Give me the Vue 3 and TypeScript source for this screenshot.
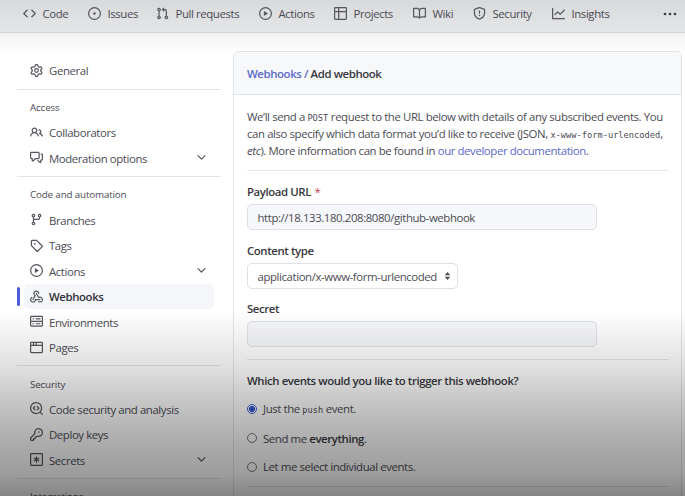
<script setup lang="ts">
interface NavItem { label: string; icon: string }
interface MenuRow { label: string; icon: string; expandable?: boolean; active?: boolean }
interface MenuGroup { title: string; rows: MenuRow[] }

const play = 'M8 0a8 8 0 1 1 0 16A8 8 0 0 1 8 0ZM1.5 8a6.5 6.5 0 1 0 13 0 6.5 6.5 0 0 0-13 0Zm4.879-2.773 4.264 2.559a.25.25 0 0 1 0 .428l-4.264 2.559A.25.25 0 0 1 6 10.559V5.442a.25.25 0 0 1 .379-.215Z'

const icons: Record<string, string> = {
  code: 'm11.28 3.22 4.25 4.25a.75.75 0 0 1 0 1.06l-4.25 4.25a.749.749 0 0 1-1.275-.326.749.749 0 0 1 .215-.734L13.94 8l-3.72-3.72a.749.749 0 0 1 .326-1.275.749.749 0 0 1 .734.215Zm-6.56 0a.751.751 0 0 1 1.042.018.751.751 0 0 1 .018 1.042L2.06 8l3.72 3.72a.749.749 0 0 1-.326 1.275.749.749 0 0 1-.734-.215L.47 8.53a.75.75 0 0 1 0-1.06Z',
  issue: 'M8 9.5a1.5 1.5 0 1 0 0-3 1.5 1.5 0 0 0 0 3ZM8 0a8 8 0 1 1 0 16A8 8 0 0 1 8 0ZM1.5 8a6.5 6.5 0 1 0 13 0 6.5 6.5 0 0 0-13 0Z',
  pull: 'M1.5 3.25a2.25 2.25 0 1 1 3 2.122v5.256a2.251 2.251 0 1 1-1.5 0V5.372A2.25 2.25 0 0 1 1.5 3.25Zm5.677-.177L9.573.677A.25.25 0 0 1 10 .854V2.5h1A2.5 2.5 0 0 1 13.5 5v5.628a2.251 2.251 0 1 1-1.5 0V5a1 1 0 0 0-1-1h-1v1.646a.25.25 0 0 1-.427.177L7.177 3.427a.25.25 0 0 1 0-.354ZM3.75 2.5a.75.75 0 1 0 0 1.5.75.75 0 0 0 0-1.5Zm0 9.5a.75.75 0 1 0 0 1.5.75.75 0 0 0 0-1.5Zm8.25.75a.75.75 0 1 0 1.5 0 .75.75 0 0 0-1.5 0Z',
  play,
  table: 'M0 1.75C0 .784.784 0 1.75 0h12.5C15.216 0 16 .784 16 1.75v12.5A1.75 1.75 0 0 1 14.25 16H1.75A1.75 1.75 0 0 1 0 14.25ZM6.5 6.5v8h7.75a.25.25 0 0 0 .25-.25V6.5Zm8-1.5V1.75a.25.25 0 0 0-.25-.25H6.5V5Zm-13 1.5v7.75c0 .138.112.25.25.25H5v-8ZM5 5V1.5H1.75a.25.25 0 0 0-.25.25V5Z',
  book: 'M0 1.75A.75.75 0 0 1 .75 1h4.253c1.227 0 2.317.59 3 1.501A3.743 3.743 0 0 1 11.006 1h4.245a.75.75 0 0 1 .75.75v10.5a.75.75 0 0 1-.75.75h-4.507a2.25 2.25 0 0 0-1.591.659l-.622.621a.75.75 0 0 1-1.06 0l-.622-.621A2.25 2.25 0 0 0 5.258 13H.75a.75.75 0 0 1-.75-.75Zm7.251 10.324.004-5.073-.002-2.253A2.25 2.25 0 0 0 5.003 2.5H1.5v9h3.757a3.75 3.75 0 0 1 1.994.574ZM8.755 4.75l-.004 7.322a3.752 3.752 0 0 1 1.992-.572H14.5v-9h-3.495a2.25 2.25 0 0 0-2.25 2.25Z',
  shield: 'M7.467.133a1.748 1.748 0 0 1 1.066 0l5.25 1.68A1.75 1.75 0 0 1 15 3.48V7c0 1.566-.32 3.182-1.303 4.682-.983 1.498-2.585 2.813-5.032 3.855a1.697 1.697 0 0 1-1.33 0c-2.447-1.042-4.049-2.357-5.032-3.855C1.32 10.182 1 8.566 1 7V3.48a1.75 1.75 0 0 1 1.217-1.667Zm.61 1.429a.25.25 0 0 0-.153 0l-5.25 1.68a.25.25 0 0 0-.174.238V7c0 1.358.275 2.666 1.057 3.86.784 1.194 2.121 2.34 4.366 3.297a.196.196 0 0 0 .154 0c2.245-.956 3.582-2.104 4.366-3.298C13.225 9.666 13.5 8.36 13.5 7V3.48a.251.251 0 0 0-.174-.237l-5.25-1.68ZM8.75 4.75v3a.75.75 0 0 1-1.5 0v-3a.75.75 0 0 1 1.5 0ZM9 10.5a1 1 0 1 1-2 0 1 1 0 0 1 2 0Z',
  graph: 'M1.5 1.75V13.5h13.75a.75.75 0 0 1 0 1.5H.75a.75.75 0 0 1-.75-.75V1.75a.75.75 0 0 1 1.5 0Zm14.28 2.53-5.25 5.25a.75.75 0 0 1-1.06 0L7 7.06 4.28 9.78a.751.751 0 0 1-1.042-.018.751.751 0 0 1-.018-1.042l3.25-3.25a.75.75 0 0 1 1.06 0L10 7.94l4.72-4.72a.751.751 0 0 1 1.042.018.751.751 0 0 1 .018 1.042Z',
  gear: 'M8 0a8.2 8.2 0 0 1 .701.031C9.444.095 9.99.645 10.16 1.29l.288 1.107c.018.066.079.158.212.224.231.114.454.243.668.386.123.082.233.09.299.071l1.103-.303c.644-.176 1.392.021 1.82.63.27.385.506.792.704 1.218.315.675.111 1.422-.364 1.891l-.814.806c-.049.048-.098.147-.088.294.016.257.016.515 0 .772-.01.147.038.246.088.294l.814.806c.475.469.679 1.216.364 1.891a7.977 7.977 0 0 1-.704 1.217c-.428.61-1.176.807-1.82.63l-1.102-.302c-.067-.019-.177-.011-.3.071a5.909 5.909 0 0 1-.668.386c-.133.066-.194.158-.211.224l-.29 1.106c-.168.646-.715 1.196-1.458 1.26a8.006 8.006 0 0 1-1.402 0c-.743-.064-1.289-.614-1.458-1.26l-.289-1.106c-.018-.066-.079-.158-.212-.224a5.738 5.738 0 0 1-.668-.386c-.123-.082-.233-.09-.299-.071l-1.103.303c-.644.176-1.392-.021-1.82-.63a8.12 8.12 0 0 1-.704-1.218c-.315-.675-.111-1.422.363-1.891l.815-.806c.05-.048.098-.147.088-.294a6.214 6.214 0 0 1 0-.772c.01-.147-.038-.246-.088-.294l-.815-.806C.635 6.045.431 5.298.746 4.623a7.92 7.92 0 0 1 .704-1.217c.428-.61 1.176-.807 1.82-.63l1.102.302c.067.019.177.011.3-.071.214-.143.437-.272.668-.386.133-.066.194-.158.211-.224l.29-1.106C6.009.645 6.556.095 7.299.03 7.53.01 7.764 0 8 0Zm-.571 1.525c-.036.003-.108.036-.137.146l-.289 1.105c-.147.561-.549.967-.998 1.189-.173.086-.34.183-.5.29-.417.278-.97.423-1.529.27l-1.103-.303c-.109-.03-.175.016-.195.045-.22.312-.412.644-.573.99-.014.031-.021.11.059.19l.815.806c.411.406.562.957.53 1.456a4.709 4.709 0 0 0 0 .582c.032.499-.119 1.05-.53 1.456l-.815.806c-.081.08-.073.159-.059.19.162.346.353.677.573.989.02.03.085.076.195.046l1.102-.303c.56-.153 1.113-.008 1.53.27.161.107.328.204.501.29.447.222.85.629.997 1.189l.289 1.105c.029.109.101.143.137.146a6.6 6.6 0 0 0 1.142 0c.036-.003.108-.036.137-.146l.289-1.105c.147-.561.549-.967.998-1.189.173-.086.34-.183.5-.29.417-.278.97-.423 1.529-.27l1.103.303c.109.029.175-.016.195-.045.22-.313.411-.644.573-.99.014-.031.021-.11-.059-.19l-.815-.806c-.411-.406-.562-.957-.53-1.456a4.709 4.709 0 0 0 0-.582c-.032-.499.119-1.05.53-1.456l.815-.806c.081-.08.073-.159.059-.19a6.464 6.464 0 0 0-.573-.989c-.02-.03-.085-.076-.195-.046l-1.102.303c-.56.153-1.113.008-1.53-.27a4.44 4.44 0 0 0-.501-.29c-.447-.222-.85-.629-.997-1.189l-.289-1.105c-.029-.11-.101-.143-.137-.146a6.6 6.6 0 0 0-1.142 0ZM11 8a3 3 0 1 1-6 0 3 3 0 0 1 6 0ZM9.5 8a1.5 1.5 0 1 0-3.001.001A1.5 1.5 0 0 0 9.5 8Z',
  people: 'M2 5.5a3.5 3.5 0 1 1 5.898 2.549 5.508 5.508 0 0 1 3.034 4.084.75.75 0 1 1-1.482.235 4 4 0 0 0-7.9 0 .75.75 0 0 1-1.482-.236A5.507 5.507 0 0 1 3.102 8.05 3.493 3.493 0 0 1 2 5.5ZM11 4a3.001 3.001 0 0 1 2.22 5.018 5.01 5.01 0 0 1 2.56 3.012.749.749 0 0 1-.885.954.752.752 0 0 1-.549-.514 3.507 3.507 0 0 0-2.522-2.372.75.75 0 0 1-.574-.73v-.352a.75.75 0 0 1 .416-.672A1.5 1.5 0 0 0 11 5.5.75.75 0 0 1 11 4Zm-5.5-.5a2 2 0 1 0-.001 3.999A2 2 0 0 0 5.5 3.5Z',
  discussion: 'M1.75 1h8.5c.966 0 1.75.784 1.75 1.75v5.5A1.75 1.75 0 0 1 10.25 10H7.061l-2.574 2.573A1.458 1.458 0 0 1 2 11.543V10h-.25A1.75 1.75 0 0 1 0 8.25v-5.5C0 1.784.784 1 1.75 1ZM1.5 2.75v5.5c0 .138.112.25.25.25h1a.75.75 0 0 1 .75.75v2.19l2.72-2.72a.749.749 0 0 1 .53-.22h3.5a.25.25 0 0 0 .25-.25v-5.5a.25.25 0 0 0-.25-.25h-8.5a.25.25 0 0 0-.25.25Zm13 2a.25.25 0 0 0-.25-.25h-.5a.75.75 0 0 1 0-1.5h.5c.966 0 1.75.784 1.75 1.75v5.5A1.75 1.75 0 0 1 14.25 12H14v1.543a1.458 1.458 0 0 1-2.487 1.03L9.22 12.28a.749.749 0 0 1 .326-1.275.749.749 0 0 1 .734.215l2.22 2.22v-2.19a.75.75 0 0 1 .75-.75h1a.25.25 0 0 0 .25-.25Z',
  branch: 'M9.5 3.25a2.25 2.25 0 1 1 3 2.122V6A2.5 2.5 0 0 1 10 8.5H6a1 1 0 0 0-1 1v1.128a2.251 2.251 0 1 1-1.5 0V5.372a2.25 2.25 0 1 1 1.5 0v1.836A2.493 2.493 0 0 1 6 7h4a1 1 0 0 0 1-1v-.628A2.25 2.25 0 0 1 9.5 3.25Zm-6 0a.75.75 0 1 0 1.5 0 .75.75 0 0 0-1.5 0Zm8.25-.75a.75.75 0 1 0 0 1.5.75.75 0 0 0 0-1.5ZM4.25 12a.75.75 0 1 0 0 1.5.75.75 0 0 0 0-1.5Z',
  tag: 'M1 7.775V2.75C1 1.784 1.784 1 2.75 1h5.025c.464 0 .91.184 1.238.513l6.25 6.25a1.75 1.75 0 0 1 0 2.474l-5.026 5.026a1.75 1.75 0 0 1-2.474 0l-6.25-6.25A1.752 1.752 0 0 1 1 7.775Zm1.5 0c0 .066.026.13.073.177l6.25 6.25a.25.25 0 0 0 .354 0l5.025-5.025a.25.25 0 0 0 0-.354l-6.25-6.25a.25.25 0 0 0-.177-.073H2.75a.25.25 0 0 0-.25.25ZM6 5a1 1 0 1 1 0 2 1 1 0 0 1 0-2Z',
  webhook: 'M5.5 4.25a2.25 2.25 0 0 1 4.5 0 .75.75 0 0 0 1.5 0 3.75 3.75 0 1 0-6.14 2.889l-2.272 4.258a.75.75 0 0 0 1.324.706L7 7.25a.75.75 0 0 0-.309-1.015A2.25 2.25 0 0 1 5.5 4.25ZM7.364 3.607a.75.75 0 0 1 1.03.257l2.608 4.349a3.75 3.75 0 1 1-.628 6.785.75.75 0 0 1 .752-1.299 2.25 2.25 0 1 0-.033-3.88.75.75 0 0 1-1.03-.256L7.107 4.636a.75.75 0 0 1 .257-1.03ZM2.9 8.776A.75.75 0 0 1 2.625 9.8 2.25 2.25 0 1 0 6 11.75a.75.75 0 0 1 .75-.751h5.5a.75.75 0 0 1 0 1.5H7.425a3.751 3.751 0 1 1-5.55-3.998.75.75 0 0 1 1.024.274Z',
  server: 'M1.75 1h12.5c.966 0 1.75.784 1.75 1.75v4c0 .372-.116.717-.314 1 .198.283.314.628.314 1v4a1.75 1.75 0 0 1-1.75 1.75H1.75A1.75 1.75 0 0 1 0 12.75v-4c0-.358.109-.707.314-1a1.739 1.739 0 0 1-.314-1v-4C0 1.784.784 1 1.75 1ZM1.5 2.75v4c0 .138.112.25.25.25h12.5a.25.25 0 0 0 .25-.25v-4a.25.25 0 0 0-.25-.25H1.75a.25.25 0 0 0-.25.25Zm.25 5.75a.25.25 0 0 0-.25.25v4c0 .138.112.25.25.25h12.5a.25.25 0 0 0 .25-.25v-4a.25.25 0 0 0-.25-.25ZM7 4.75A.75.75 0 0 1 7.75 4h4.5a.75.75 0 0 1 0 1.5h-4.5A.75.75 0 0 1 7 4.75ZM7.75 10h4.5a.75.75 0 0 1 0 1.5h-4.5a.75.75 0 0 1 0-1.5ZM3 4.75A.75.75 0 0 1 3.75 4h.5a.75.75 0 0 1 0 1.5h-.5A.75.75 0 0 1 3 4.75ZM3.75 10h.5a.75.75 0 0 1 0 1.5h-.5a.75.75 0 0 1 0-1.5Z',
  browser: 'M0 2.75C0 1.784.784 1 1.75 1h12.5c.966 0 1.75.784 1.75 1.75v10.5A1.75 1.75 0 0 1 14.25 15H1.75A1.75 1.75 0 0 1 0 13.25ZM14.5 6h-13v7.25c0 .138.112.25.25.25h12.5a.25.25 0 0 0 .25-.25Zm-6-3.5v2h6V2.75a.25.25 0 0 0-.25-.25ZM5 2.5v2h2v-2Zm-3.25 0a.25.25 0 0 0-.25.25V4.5h2v-2Z',
  codescan: 'M8.47 4.97a.75.75 0 0 0 0 1.06L9.94 7.5 8.47 8.97a.75.75 0 1 0 1.06 1.06l2-2a.75.75 0 0 0 0-1.06l-2-2a.75.75 0 0 0-1.06 0ZM6.53 6.03a.75.75 0 0 0-1.06-1.06l-2 2a.75.75 0 0 0 0 1.06l2 2a.75.75 0 1 0 1.06-1.06L5.06 7.5l1.47-1.47ZM12.246 13.307a7.501 7.501 0 1 1 1.06-1.06l2.474 2.473a.749.749 0 0 1-.326 1.275.749.749 0 0 1-.734-.215ZM1.5 7.5a6.002 6.002 0 0 0 3.608 5.504 6.002 6.002 0 0 0 6.486-1.117.748.748 0 0 1 .292-.293A6 6 0 1 0 1.5 7.5Z',
  key: 'M10.5 0a5.499 5.499 0 1 1-1.288 10.848l-.932.932a.749.749 0 0 1-.53.22H7v.75a.749.749 0 0 1-.22.53l-.5.5a.749.749 0 0 1-.53.22H5v.75a.749.749 0 0 1-.22.53l-.5.5a.749.749 0 0 1-.53.22h-2A1.75 1.75 0 0 1 0 14.25v-2c0-.199.079-.389.22-.53l4.932-4.932A5.5 5.5 0 0 1 10.5 0Zm-4 5.5c-.001.431.069.86.205 1.269a.75.75 0 0 1-.181.768L1.5 12.56v1.69c0 .138.112.25.25.25h1.69l.06-.06v-1.19a.75.75 0 0 1 .75-.75h1.19l.06-.06v-1.19a.75.75 0 0 1 .75-.75h1.19l1.023-1.025a.75.75 0 0 1 .768-.18A4 4 0 1 0 6.5 5.5ZM11 6a1 1 0 1 1 0-2 1 1 0 0 1 0 2Z',
  asterisk: 'M1.75 0h12.5C15.216 0 16 .784 16 1.75v12.5A1.75 1.75 0 0 1 14.25 16H1.75A1.75 1.75 0 0 1 0 14.25V1.75C0 .784.784 0 1.75 0ZM1.5 1.75v12.5c0 .138.112.25.25.25h12.5a.25.25 0 0 0 .25-.25V1.75a.25.25 0 0 0-.25-.25H1.75a.25.25 0 0 0-.25.25ZM8 4a.75.75 0 0 1 .75.75V6.7l1.69-.975a.75.75 0 0 1 .75 1.3L9.5 8l1.69.976a.75.75 0 0 1-.75 1.298L8.75 9.3v1.951a.75.75 0 0 1-1.5 0V9.299l-1.69.976a.75.75 0 0 1-.75-1.3L6.5 8l-1.69-.975a.75.75 0 0 1 .75-1.3l1.69.976V4.75A.75.75 0 0 1 8 4Z',
  chevron: 'M12.78 5.22a.749.749 0 0 1 0 1.06l-4.25 4.25a.749.749 0 0 1-1.06 0L3.22 6.28a.749.749 0 1 1 1.06-1.06L8 8.939l3.72-3.719a.749.749 0 0 1 1.06 0Z',
}

const nav: NavItem[] = [
  { label: 'Code', icon: 'code' },
  { label: 'Issues', icon: 'issue' },
  { label: 'Pull requests', icon: 'pull' },
  { label: 'Actions', icon: 'play' },
  { label: 'Projects', icon: 'table' },
  { label: 'Wiki', icon: 'book' },
  { label: 'Security', icon: 'shield' },
  { label: 'Insights', icon: 'graph' },
]

const groups: MenuGroup[] = [
  {
    title: 'Access',
    rows: [
      { label: 'Collaborators', icon: 'people' },
      { label: 'Moderation options', icon: 'discussion', expandable: true },
    ],
  },
  {
    title: 'Code and automation',
    rows: [
      { label: 'Branches', icon: 'branch' },
      { label: 'Tags', icon: 'tag' },
      { label: 'Actions', icon: 'play', expandable: true },
      { label: 'Webhooks', icon: 'webhook', active: true },
      { label: 'Environments', icon: 'server' },
      { label: 'Pages', icon: 'browser' },
    ],
  },
  {
    title: 'Security',
    rows: [
      { label: 'Code security and analysis', icon: 'codescan' },
      { label: 'Deploy keys', icon: 'key' },
      { label: 'Secrets', icon: 'asterisk', expandable: true },
    ],
  },
  { title: 'Integrations', rows: [] },
]
</script>

<template>
  <div class="page">
    <nav class="topbar">
      <a v-for="item in nav" :key="item.label" class="tab">
        <svg class="icon" viewBox="0 0 16 16"><path :d="icons[item.icon]" /></svg>
        <span>{{ item.label }}</span>
      </a>
      <svg class="more" viewBox="0 0 14 4"><circle cx="2" cy="2" r="1.35" /><circle cx="7" cy="2" r="1.35" /><circle cx="12" cy="2" r="1.35" /></svg>
    </nav>

    <div class="content">
      <aside class="sidebar">
        <a class="row general">
          <svg class="icon" viewBox="0 0 16 16"><path :d="icons.gear" /></svg>
          <span>General</span>
        </a>
        <section v-for="group in groups" :key="group.title" class="group">
          <h3>{{ group.title }}</h3>
          <a v-for="row in group.rows" :key="row.label" class="row" :class="{ active: row.active }">
            <svg class="icon" viewBox="0 0 16 16"><path :d="icons[row.icon]" /></svg>
            <span>{{ row.label }}</span>
            <svg v-if="row.expandable" class="icon chevron" viewBox="0 0 16 16"><path :d="icons.chevron" /></svg>
          </a>
        </section>
      </aside>

      <main class="card">
        <header><a>Webhooks /</a> Add webhook</header>
        <div class="body">
          <div class="intro">
            <div class="line">We’ll send a <code>POST</code> request to the URL below with details of any subscribed events. You</div>
            <div class="line">can also specify which data format you’d like to receive (JSON, <code>x-www-form-urlencoded</code>,</div>
            <div class="line"><em>etc</em>). More information can be found in <a>our developer documentation</a>.</div>
          </div>
          <div class="fields">
            <label>Payload URL <i>*</i></label>
            <div class="input">http://18.133.180.208:8080/github-webhook</div>
            <label>Content type</label>
            <div class="select">
              <span>application/x-www-form-urlencoded</span>
              <svg viewBox="0 0 8 10"><path d="M4 0 7.4 4H.6ZM4 10 .6 6h6.8Z" /></svg>
            </div>
            <label>Secret</label>
            <div class="input"></div>
          </div>
          <div class="events">
            <h4>Which events would you like to trigger this webhook?</h4>
            <div class="option"><span class="radio on"></span><p>Just the <code>push</code> event.</p></div>
            <div class="option"><span class="radio"></span><p>Send me <b>everything</b>.</p></div>
            <div class="option"><span class="radio"></span><p>Let me select individual events.</p></div>
          </div>
        </div>
      </main>
    </div>
    <div class="shade"></div>
  </div>
</template>

<style>
body { margin: 0; overflow: hidden; }
</style>

<style scoped>
* { box-sizing: border-box; }
.page {
  position: relative;
  width: 685px;
  height: 496px;
  overflow: hidden;
  background: #fff;
  color: #4b4b53;
  font-family: "Open Sans", "Noto Sans", sans-serif;
  font-size: 11.4px;
  letter-spacing: -0.4px;
  line-height: 17px;
  white-space: nowrap;
}
.icon { width: 13px; height: 13px; flex: none; fill: #55565e; }
.topbar {
  display: grid;
  grid-template-columns: 65px 68px 103px 75px 79px 60px 79px 111px 14px;
  align-items: center;
  height: 33px;
  padding: 0 0 5px 23px;
  background: linear-gradient(#d8d9db, #e5e6e8);
  border-bottom: 1px solid #cfd1d3;
}
.tab { display: flex; align-items: center; gap: 6.5px; }
.more { width: 14px; height: 4px; fill: #3f4046; }
.content {
  display: flex;
  height: 463px;
  background: linear-gradient(#f0f1f1, #fff 20px);
}
.sidebar { width: 233px; padding: 25px 12px 0 17px; }
.row {
  position: relative;
  display: flex;
  align-items: center;
  gap: 6px;
  height: 25.5px;
  margin: 0 7px 0 7px;
  padding: 0 6px;
  border-radius: 5px;
}
.row .icon { margin-top: -1px; }
.row .chevron { margin-left: auto; }
.row.active { background: #f5f6f9; color: #303039; font-weight: 600; }
.row.active::before {
  content: "";
  position: absolute;
  left: -7px;
  top: 3px;
  width: 3px;
  height: 19px;
  border-radius: 3px;
  background: #4860d8;
}
.general { margin-bottom: 5px; }
.group { padding-bottom: 4.7px; border-top: 1px solid #e2e6e9; }
h3 {
  height: 30.6px;
  margin: 0;
  padding: 9.5px 13px 0;
  font-size: 9.8px;
  font-weight: 500;
  letter-spacing: -0.15px;
  line-height: 17px;
}
.card {
  width: 449px;
  height: 470px;
  margin-top: 18px;
  border: 1px solid #e1e5e8;
  border-radius: 5px;
  background: #fff;
}
.card header {
  height: 43px;
  padding: 13px 13px 0;
  border-bottom: 1px solid #dee4e9;
  border-radius: 4px 4px 0 0;
  background: #f6f8fa;
  color: #36363e;
  font-weight: 600;
}
a { color: inherit; }
header a, .intro a { color: #5b69c8; }
.body { padding: 13px 12px 0 13px; }
.intro { height: 63px; border-bottom: 1px solid #e7e8ea; }
.line { height: 17px; }
code { font-family: "DejaVu Sans Mono", "Liberation Mono", monospace; font-size: 8.7px; letter-spacing: 0; }
.fields { height: 189px; padding-top: 12px; border-bottom: 1px solid #e4e5e7; }
label, h4 { display: block; height: 17px; margin: 0; font-size: 11.4px; font-weight: 600; color: #383840; }
label i { color: #c33d4e; font-style: normal; font-weight: 400; margin-left: 1px; }
.input, .select {
  height: 26px;
  border: 1px solid #dde1e6;
  border-radius: 5px;
  padding: 4px 9.5px;
}
.input { width: 350px; margin: 4px 0 12px; background: #f6f7fa; }
.select {
  display: flex;
  align-items: center;
  justify-content: space-between;
  width: 211px;
  margin: 4px 0 11px;
  padding: 0 6px 0 9.5px;
}
.select svg { width: 7px; height: 8px; flex: none; fill: #4c4d55; }
.events { height: 127px; padding-top: 12px; border-bottom: 1px solid #dcdcdc; }
.option { display: flex; align-items: center; gap: 6px; height: 28.7px; }
h4 { margin-bottom: 6px; }
p { margin: 0; }
b { font-weight: 600; color: #383840; }
.radio { width: 10px; height: 10px; border: 1px solid #77777c; border-radius: 50%; }
.radio.on { border-color: #3f5ed8; background: radial-gradient(#3553d0 0 2.6px, #fff 3.4px); }
.shade {
  position: absolute;
  inset: 310px 0 0;
  background: linear-gradient(rgba(0, 0, 0, 0), rgba(0, 0, 0, .085) 40px, rgba(0, 0, 0, .13) 60px, rgba(0, 0, 0, .22) 90px, rgba(0, 0, 0, .32) 130px, rgba(0, 0, 0, .39) 165px, rgba(0, 0, 0, .48) 186px);
}
</style>
